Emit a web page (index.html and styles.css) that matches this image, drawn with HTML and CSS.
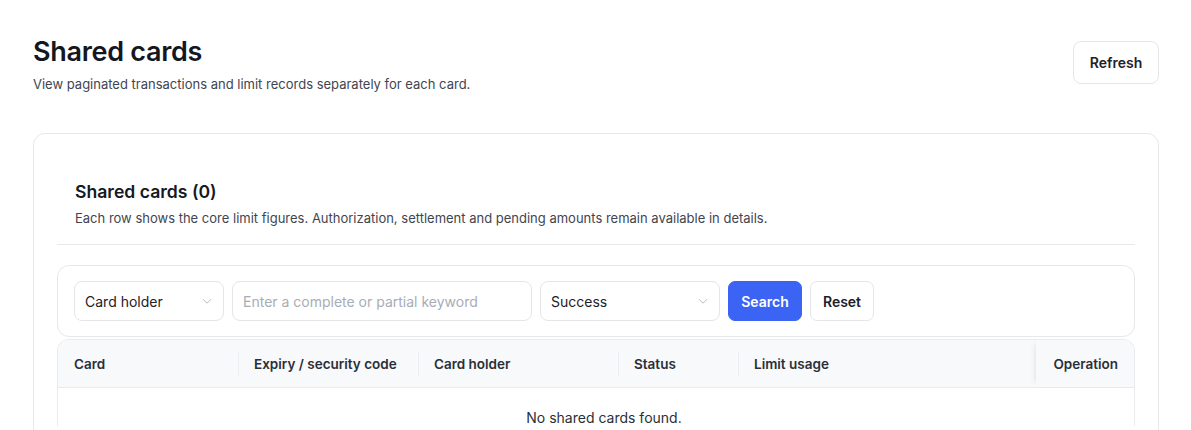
FILE: index.html
```html
<!DOCTYPE html>
<html lang="en">
<head>
<meta charset="utf-8">
<title>Shared cards</title>
<link rel="stylesheet" href="styles.css">
</head>
<body>
<div class="page">
  <header class="page-head">
    <div>
      <h1 class="page-title">Shared cards</h1>
      <p class="page-sub">View paginated transactions and limit records separately for each card.</p>
    </div>
    <button class="btn btn-default btn-lg">Refresh</button>
  </header>

  <section class="card">
    <div class="card-head">
      <h2 class="card-title">Shared cards (0)</h2>
      <p class="card-sub">Each row shows the core limit figures. Authorization, settlement and pending amounts remain available in details.</p>
    </div>

    <div class="filters">
      <div class="select w-holder"><span>Card holder</span><svg class="chev" viewBox="0 0 12 12" width="12" height="12"><path d="M2 4.2 6 8.2 10 4.2" fill="none" stroke="#b8bcc4" stroke-width="1"/></svg></div>
      <div class="input w-input"><span class="ph">Enter a complete or partial keyword</span></div>
      <div class="select w-status"><span>Success</span><svg class="chev" viewBox="0 0 12 12" width="12" height="12"><path d="M2 4.2 6 8.2 10 4.2" fill="none" stroke="#b8bcc4" stroke-width="1"/></svg></div>
      <button class="btn btn-primary">Search</button>
      <button class="btn btn-default">Reset</button>
    </div>

    <div class="table">
      <div class="thead">
        <div class="th c-card">Card</div>
        <div class="th c-exp">Expiry / security code</div>
        <div class="th c-holder">Card holder</div>
        <div class="th c-status">Status</div>
        <div class="th c-limit">Limit usage</div>
        <div class="th c-op">Operation</div>
      </div>
      <div class="empty">No shared cards found.</div>
    </div>
  </section>
</div>
</body>
</html>
```

FILE: styles.css
```css
* { box-sizing: border-box; }
html, body { margin: 0; padding: 0; background: #fff; }
body {
  font-family: Inter, "Noto Sans", "Liberation Sans", sans-serif;
  color: #1f2329;
  overflow: hidden;
}
.page { padding: 34px 32px 0 33px; width: 1191px; }
.page-head {
  display: flex;
  justify-content: space-between;
  align-items: flex-start;
}
.page-title {
  margin: 0;
  font-size: 27px;
  line-height: 36px;
  font-weight: 600;
  letter-spacing: -0.3px;
  color: #14171f;
}
.page-sub {
  margin: 5px 0 0;
  font-size: 13px;
  line-height: 18px;
  color: #3f4550;
}
.btn {
  font-family: inherit;
  font-size: 14px;
  font-weight: 600;
  height: 40px;
  padding: 0 10px;
  border-radius: 7px;
  border: 1px solid #e4e6ea;
  background: #fff;
  color: #1d2129;
  cursor: pointer;
}
.btn-lg { height: 43px; margin-top: 7px; border-radius: 8px; }
.btn-primary { background: #3b64f4; border-color: #3b64f4; color: #fff; width: 74px; }
.btn-default { width: 64px; }
.btn-lg.btn-default { width: 86px; }

.card {
  margin-top: 40px;
  border: 1px solid #e6e8eb;
  border-radius: 12px;
  padding: 0 23px;
  height: 320px;
}
.card-head {
  padding: 46px 18px 17px;
  border-bottom: 1px solid #e6e8eb;
}
.card-title {
  margin: 0;
  font-size: 17.6px;
  line-height: 24px;
  font-weight: 600;
  color: #16191f;
}
.card-sub {
  margin: 5px 0 0;
  font-size: 13px;
  line-height: 18px;
  color: #3f4550;
}
.filters {
  margin-top: 20px;
  border: 1px solid #e6e8eb;
  border-radius: 12px;
  padding: 15px 16px;
  display: flex;
  gap: 8px;
  align-items: center;
}
.select, .input {
  height: 40px;
  border: 1px solid #e4e6ea;
  border-radius: 8px;
  display: flex;
  align-items: center;
  justify-content: space-between;
  padding: 0 10px;
  font-size: 14px;
  color: #1d2129;
}
.w-holder { width: 150px; }
.w-input { width: 300px; }
.w-status { width: 180px; }
.ph { color: #a8adb5; }
.chev { flex: none; }

.table {
  margin-top: 2px;
  border: 1px solid #e9ebee;
  border-radius: 12px 12px 0 0;
  border-bottom: none;
  overflow: hidden;
}
.thead {
  display: flex;
  height: 48px;
  background: #f8f9fb;
  border-bottom: 1px solid #e9ebee;
}
.th {
  position: relative;
  display: flex;
  align-items: center;
  padding: 0 16px;
  font-size: 13.5px;
  font-weight: 600;
  color: #2a2f38;
}
.th + .th::before {
  content: "";
  position: absolute;
  left: 0;
  top: 12px;
  height: 24px;
  width: 1px;
  background: #eceef1;
}
.c-card { width: 180px; }
.c-exp { width: 180px; }
.c-holder { width: 200px; }
.c-status { width: 120px; }
.c-limit { flex: 1; }
.c-op {
  width: 98px;
  justify-content: flex-end;
  box-shadow: -4px 0 6px -4px rgba(0,0,0,0.12);
}
.c-op::before { display: none; }
.empty {
  text-align: center;
  padding: 21px 0 0 16px;
  font-size: 14px;
  color: #2a2f38;
}
```
